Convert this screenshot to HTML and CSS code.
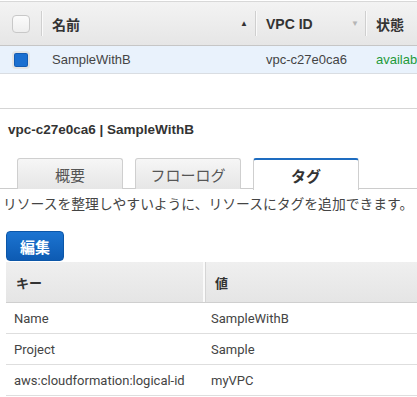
FILE: index.html
```html
<!DOCTYPE html>
<html lang="ja">
<head>
    <meta charset="UTF-8">
    <title>VPC タグ</title>
    <link rel="stylesheet" href="styles.css">
</head>
<body>
    <div class="grid">
        <div class="grid-head">
            <div class="cell cell-check"><span class="check"></span></div>
            <div class="cell cell-name">名前<span class="sort up">&#9650;</span></div>
            <div class="cell cell-vpc">VPC ID<span class="sort down">&#9660;</span></div>
            <div class="cell cell-state">状態</div>
        </div>
        <div class="grid-row">
            <div class="cell cell-check"><span class="check on"></span></div>
            <div class="cell cell-name">SampleWithB</div>
            <div class="cell cell-vpc">vpc-c27e0ca6</div>
            <div class="cell cell-state green">availab</div>
        </div>
    </div>

    <div class="detail">
        <div class="detail-title">vpc-c27e0ca6 | SampleWithB</div>

        <div class="tabs">
            <div class="tab">概要</div>
            <div class="tab">フローログ</div>
            <div class="tab active">タグ</div>
        </div>

        <p class="desc">リソースを整理しやすいように、リソースにタグを追加できます。</p>

        <button class="btn">編集</button>

        <div class="tags">
            <div class="tags-head">
                <div class="tcell key">キー</div>
                <div class="tcell">値</div>
            </div>
            <div class="tags-row">
                <div class="tcell key">Name</div>
                <div class="tcell">SampleWithB</div>
            </div>
            <div class="tags-row">
                <div class="tcell key">Project</div>
                <div class="tcell">Sample</div>
            </div>
            <div class="tags-row">
                <div class="tcell key">aws:cloudformation:logical-id</div>
                <div class="tcell">myVPC</div>
            </div>
        </div>
    </div>
</body>
</html>
```

FILE: styles.css
```css
* {
    margin: 0;
    padding: 0;
    box-sizing: border-box;
}

body {
    font-family: "Liberation Sans", Arial, "Noto Sans CJK JP", sans-serif;
    color: #444;
    background: #fff;
    overflow: hidden;
    width: 417px;
}

/* 上部の一覧 */
.grid {
    padding-top: 1px;
    border-bottom: 1px solid #d5d5d5;
    height: 109px;
    overflow: hidden;
}

.grid-head,
.grid-row {
    display: grid;
    grid-template-columns: 41px 214px 110px 52px;
}

.grid-head {
    height: 45px;
    border-top: 1px solid #d8d8d8;
    border-bottom: 1px solid #c6c6c6;
    background: linear-gradient(#f3f3f3, #e6e6e6);
    font-weight: bold;
    font-size: 14px;
    color: #333;
}

.grid-row {
    height: 28px;
    background: #e9f2fc;
    border-bottom: 1px solid #d9dde2;
    font-size: 13px;
    color: #444;
}

.cell {
    display: flex;
    align-items: center;
    padding-left: 11px;
    position: relative;
    white-space: nowrap;
}

.grid-head .cell + .cell::before {
    content: "";
    position: absolute;
    left: 0;
    top: 9px;
    bottom: 9px;
    border-left: 1px solid #cfcfcf;
    border-right: 1px solid #fafafa;
}

.cell-check {
    padding-left: 12px;
}

.check {
    width: 18px;
    height: 18px;
    border: 1px solid #c8c8c8;
    border-radius: 4px;
    background: linear-gradient(#fbfbfb, #eeeeee);
}

.check.on {
    border: 2px solid #e4e4e4;
    background: #1b6fd0;
    box-shadow: inset 0 0 0 1px #155bb0;
}

.sort {
    position: absolute;
    font-size: 8px;
    font-weight: normal;
}

.sort.up {
    right: 7px;
    color: #333;
}

.sort.down {
    right: 6px;
    color: #b5b5b5;
}

.green {
    color: #1f9a3a;
}

/* 詳細 */
.detail-title {
    font-weight: bold;
    font-size: 13.5px;
    color: #333;
    padding: 13px 0 0 8px;
    height: 49px;
}

.tabs {
    display: flex;
    gap: 12px;
    padding-left: 17px;
    border-bottom: 1px solid #cccccc;
    height: 31px;
}

.tab {
    width: 106px;
    height: 31px;
    border: 1px solid #cfcfcf;
    border-bottom: none;
    border-radius: 3px 3px 0 0;
    background: linear-gradient(#f6f6f6, #e6e6e6);
    font-size: 15px;
    color: #555;
    display: flex;
    align-items: center;
    justify-content: center;
    padding-top: 1px;
}

.tab.active {
    background: #fff;
    border-top: 2px solid #1e6cc0;
    font-weight: bold;
    color: #333;
    height: 32px;
}

.desc {
    font-family: "Noto Sans CJK JP", sans-serif;
    font-size: 13.8px;
    color: #444;
    padding: 4px 0 0 3px;
    white-space: nowrap;
    height: 42px;
}

.btn {
    display: block;
    margin-left: 6px;
    width: 58px;
    height: 30px;
    border: 1px solid #0b56a8;
    border-radius: 4px;
    background: linear-gradient(#1c74d1, #0e5bb3);
    color: #fff;
    font-family: "Noto Sans CJK JP", sans-serif;
    font-weight: bold;
    font-size: 15px;
}

.tags {
    margin: 1px 0 0 6px;
    font-family: Roboto, "Noto Sans CJK JP", sans-serif;
    font-size: 13px;
    color: #444;
}

.tags-head,
.tags-row {
    display: grid;
    grid-template-columns: 197px 1fr;
}

.tags-head {
    height: 41px;
    background: linear-gradient(#efefef, #e5e5e5);
    border-bottom: 1px solid #cfcfcf;
    font-weight: bold;
    color: #333;
}

.tags-head .tcell + .tcell {
    border-left: 2px solid #fafafa;
    box-shadow: inset 1px 0 0 #d5d5d5;
}

.tags-row {
    height: 31px;
    border-bottom: 1px solid #dedede;
}

.tcell {
    display: flex;
    align-items: center;
    padding-left: 8px;
}

.tags-head .tcell {
    padding-left: 10px;
}
```
